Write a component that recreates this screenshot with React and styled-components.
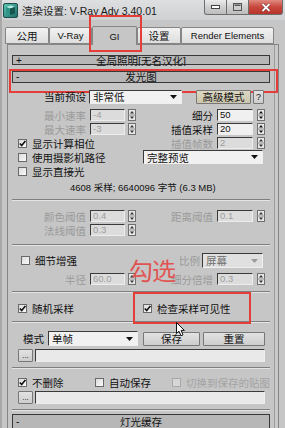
import React from 'react';
import styled, { createGlobalStyle, css } from 'styled-components';

const FONT = `"Liberation Sans", "Noto Sans CJK SC", sans-serif`;
const RED = '#e43e3a';

const Global = createGlobalStyle`
  html, body { margin: 0; padding: 0; background: #c5c5c5; }
  #root { width: 285px; height: 428px; overflow: hidden; }
  * { box-sizing: border-box; }
`;

const Window = styled.div`
  position: relative;
  width: 285px;
  height: 428px;
  overflow: hidden;
  background: #c6c6c6;
  border-left: 2px solid #a9a9a9;
  font-family: ${FONT};
  font-size: 10.5px;
  color: #111;
  display: flex;
  flex-direction: column;
`;

const TitleBar = styled.div`
  height: 20px;
  flex: none;
  display: flex;
  align-items: center;
  padding-left: 1px;
  background: linear-gradient(#dedfe0, #cfd0d1);
`;

const TitleText = styled.span`
  margin-left: 4px;
  font-size: 10.5px;
  color: #1a1a1a;
  white-space: nowrap;
`;

const Controls = styled.div`
  margin-left: auto;
  margin-right: 2px;
  align-self: flex-start;
  display: flex;
  height: 15px;
`;

const CtrlBtn = styled.div`
  width: ${p => p.$w}px;
  height: 15px;
  border: 1px solid #6d6d6d;
  border-left: ${p => (p.$first ? '1px solid #6d6d6d' : 'none')};
  border-top: none;
  display: flex;
  align-items: center;
  justify-content: center;
  background: ${p =>
    p.$close
      ? 'linear-gradient(#e08a80, #c9473c 50%, #b7342b)'
      : 'linear-gradient(#ececec, #cfcfcf 50%, #bdbdbd)'};
  border-radius: ${p => p.$radius || '0'};
  color: #fff;
  font-weight: bold;
  font-size: 10px;
`;

const TabsRow = styled.div`
  margin-top: 6px;
  height: 18px;
  flex: none;
  display: flex;
  align-items: flex-end;
  padding-left: 3px;
`;

const Tab = styled.div`
  position: relative;
  width: ${p => p.$w}px;
  height: ${p => (p.$active ? 19 : 17)}px;
  margin-bottom: ${p => (p.$active ? -1 : 0)}px;
  z-index: ${p => (p.$active ? 2 : 1)};
  display: flex;
  align-items: center;
  justify-content: center;
  border: 1px solid #858585;
  border-bottom: ${p => (p.$active ? 'none' : '1px solid #858585')};
  border-radius: 2px 2px 0 0;
  background: ${p => (p.$active ? '#c6c6c6' : 'linear-gradient(#f2f2f2, #dddddd)')};
  font-size: ${p => (p.$latin ? 9.5 : 10.5)}px;
  white-space: nowrap;
  ${p =>
    p.$highlight &&
    css`
      &::after {
        content: '';
        position: absolute;
        left: -4px;
        top: -12px;
        width: 49px;
        height: 33px;
        border: 2px solid ${RED};
      }
    `}
`;

const Panel = styled.div`
  flex: 1;
  margin: 0 6px 0 5px;
  border: 1px solid #858585;
  border-bottom: none;
  display: flex;
  overflow: hidden;
  background: #c6c6c6;
`;

const Content = styled.div`
  flex: 1;
  padding: 10px 4px 0 4px;
  display: flex;
  flex-direction: column;
`;

const ScrollTrack = styled.div`
  width: 6px;
  flex: none;
  border-left: 1px solid #9c9c9c;
  background: #c9c9c9;
`;

const Header = styled.div`
  position: relative;
  flex: none;
  height: ${p => p.$h}px;
  margin-top: ${p => p.$mt || 0}px;
  border: 1px solid #383838;
  background: #b7b7b7;
  display: grid;
  grid-template-columns: 14px 1fr 14px;
  align-items: center;
  line-height: 1;
  ${p =>
    p.$highlight &&
    css`
      &::after {
        content: '';
        position: absolute;
        left: -4px;
        top: -3px;
        width: 265px;
        height: 20px;
        border: 2px solid ${RED};
      }
    `}
`;

const Sign = styled.span`
  padding-left: 3px;
  font-size: 10px;
`;

const HeaderTitle = styled.span`
  text-align: center;
  overflow: hidden;
  height: 100%;
  display: flex;
  align-items: center;
  justify-content: center;
  font-size: 10.5px;
`;

const Body = styled.div`
  position: relative;
  display: flex;
  flex-direction: column;
`;

const Row = styled.div`
  display: flex;
  align-items: center;
  flex: none;
  height: ${p => p.$h}px;
  margin-top: ${p => p.$mt || 0}px;
  padding-left: ${p => p.$pl || 0}px;
`;

const Group = styled.div`
  display: flex;
  align-items: center;
  flex: none;
  width: ${p => p.$w}px;
  padding-left: ${p => p.$pl || 0}px;
`;

const Label = styled.span`
  flex: none;
  width: ${p => (p.$w ? `${p.$w}px` : 'auto')};
  text-align: right;
  white-space: nowrap;
  color: ${p => (p.$dim ? '#9a9a9a' : '#111')};
`;

const Field = styled.div`
  flex: none;
  width: ${p => p.$w}px;
  height: 12px;
  margin-left: ${p => p.$ml || 0}px;
  background: ${p => (p.$dim ? '#dcdcdc' : '#f0f0f0')};
  border-top: 1px solid #3a3a3a;
  border-left: 1px solid #3a3a3a;
  border-right: 1px solid #ededed;
  border-bottom: 1px solid #ededed;
  color: ${p => (p.$dim ? '#9c9c9c' : '#111')};
  font-family: "Liberation Sans", sans-serif;
  font-size: 9.5px;
  line-height: 10px;
  padding-left: 2px;
  white-space: nowrap;
  overflow: hidden;
`;

const LongField = styled(Field)`
  height: 13px;
  background: #e9e9e9;
`;

const SelectBox = styled.div`
  flex: none;
  width: ${p => p.$w}px;
  height: ${p => p.$h || 14}px;
  margin-left: ${p => p.$ml || 0}px;
  display: flex;
  align-items: center;
  justify-content: space-between;
  padding: 0 4px 0 3px;
  background: ${p => (p.$dim ? '#e0e0e0' : '#f1f1f1')};
  border-top: 1px solid #3a3a3a;
  border-left: 1px solid #3a3a3a;
  border-right: 1px solid #efefef;
  border-bottom: 1px solid #efefef;
  color: ${p => (p.$dim ? '#6f6f6f' : '#111')};
  white-space: nowrap;
`;

const Button = styled.div`
  flex: none;
  width: ${p => p.$w}px;
  height: ${p => p.$h || 14}px;
  margin-left: ${p => p.$ml || 0}px;
  display: flex;
  align-items: center;
  justify-content: center;
  border: 1px solid #777;
  border-radius: 1px;
  background: ${p =>
    p.$tan ? 'linear-gradient(#dcd8c2, #cbc6ad)' : 'linear-gradient(#e2e2e2, #cdcdcd)'};
  white-space: nowrap;
  font-size: ${p => p.$fs || 10.5}px;
`;

const Box = styled.span`
  flex: none;
  width: 9px;
  height: 9px;
  border: 1px solid ${p => (p.$dim ? '#a8a8a8' : '#6a6a6a')};
  background: ${p => (p.$dim ? '#d6d6d6' : 'linear-gradient(135deg, #dcdcdc, #fafafa)')};
  display: flex;
  align-items: center;
  justify-content: center;
`;

const CheckItem = styled.div`
  position: relative;
  display: flex;
  align-items: center;
  gap: 5px;
  flex: none;
  width: ${p => (p.$w ? `${p.$w}px` : 'auto')};
  color: ${p => (p.$dim ? '#a3a3a3' : '#111')};
  white-space: nowrap;
  ${p =>
    p.$highlight &&
    css`
      &::after {
        content: '';
        position: absolute;
        left: -10px;
        top: -9px;
        width: 114px;
        height: 28px;
        border: 2px solid ${RED};
      }
    `}
`;

const Info = styled.div`
  flex: none;
  margin-top: ${p => p.$mt}px;
  height: 12px;
  padding-left: 58px;
  font-size: 9.5px;
  line-height: 12px;
  white-space: nowrap;
`;

const Divider = styled.div`
  flex: none;
  margin-top: ${p => p.$mt}px;
  height: 2px;
  border-top: 1px solid #7f7f7f;
  border-bottom: 1px solid #e4e4e4;
`;

const Annotation = styled.div`
  position: absolute;
  left: 117px;
  top: 172px;
  font-family: "Noto Sans CJK SC", sans-serif;
  font-size: 24px;
  line-height: 30px;
  color: #e05452;
  letter-spacing: -1px;
`;

const CursorMark = styled.svg`
  position: absolute;
  left: 164px;
  top: 239px;
`;

const AppIcon = () => (
  <svg width="15" height="15" viewBox="0 0 15 15">
    <defs>
      <linearGradient id="ig" x1="0" y1="0" x2="1" y2="1">
        <stop offset="0" stopColor="#5cc6b4" />
        <stop offset="1" stopColor="#1b6b66" />
      </linearGradient>
    </defs>
    <rect x="0.5" y="0.5" width="14" height="14" rx="1.5" fill="url(#ig)" stroke="#1f4d4a" />
    <path d="M3 4 L8 2.5 L12 4 L7 5.5 Z" fill="#b8efe4" />
    <path d="M3 4 L7 5.5 L7 12 L3 10.5 Z" fill="#2f9486" />
    <path d="M7 5.5 L12 4 L12 10.5 L7 12 Z" fill="#16554f" />
  </svg>
);

const Arrows = ({ ml = 3, dim }) => (
  <svg width="8" height="12" viewBox="0 0 8 12" style={{ marginLeft: ml, flex: 'none' }}>
    <rect x="0.5" y="0.5" width="7" height="11" fill="#e6e6e6" stroke="#707070" />
    <line x1="0.5" y1="6" x2="7.5" y2="6" stroke="#909090" />
    <path d="M4 2 L6 4.5 L2 4.5 Z" fill={dim ? '#333' : '#111'} />
    <path d="M4 10 L6 7.5 L2 7.5 Z" fill={dim ? '#333' : '#111'} />
  </svg>
);

const DropArrow = ({ dim }) => (
  <svg width="7" height="4" viewBox="0 0 7 4">
    <path d="M0 0 L7 0 L3.5 4 Z" fill={dim ? '#9a9a9a' : '#111'} />
  </svg>
);

const Check = ({ on, dim }) => (
  <Box $dim={dim}>
    {on && (
      <svg width="7" height="7" viewBox="0 0 7 7">
        <path d="M0.8 3.4 L2.7 5.6 L6.4 0.9" fill="none" stroke="#111" strokeWidth="1.6" />
      </svg>
    )}
  </Box>
);

const Spin = ({ value, dim, w = 35, ml = 4, aml = 3 }) => (
  <>
    <Field $w={w} $ml={ml} $dim={dim}>{value}</Field>
    <Arrows ml={aml} dim={dim} />
  </>
);

const Select = ({ text, w, ml, dim, h }) => (
  <SelectBox $w={w} $ml={ml} $dim={dim} $h={h}>
    <span>{text}</span>
    <DropArrow dim={dim} />
  </SelectBox>
);

export default function App() {
  return (
    <Window>
      <Global />
      <TitleBar>
        <AppIcon />
        <TitleText>渲染设置: V-Ray Adv 3.40.01</TitleText>
        <Controls>
          <CtrlBtn $w={23} $first $radius="0 0 0 3px">
            <svg width="9" height="4" viewBox="0 0 9 4">
              <rect x="0.5" y="0.5" width="8" height="3" fill="#fff" stroke="#444" />
            </svg>
          </CtrlBtn>
          <CtrlBtn $w={22}>
            <svg width="9" height="8" viewBox="0 0 9 8">
              <rect x="0.5" y="0.5" width="8" height="7" fill="none" stroke="#555" />
              <rect x="1.5" y="1.5" width="6" height="1.5" fill="#555" />
            </svg>
          </CtrlBtn>
          <CtrlBtn $w={34} $close $radius="0 0 3px 0">
            <svg width="10" height="9" viewBox="0 0 10 9">
              <path d="M1.5 1 L8.5 8 M8.5 1 L1.5 8" stroke="#6a2a24" strokeWidth="3" />
              <path d="M1.5 1 L8.5 8 M8.5 1 L1.5 8" stroke="#fff" strokeWidth="1.8" />
            </svg>
          </CtrlBtn>
        </Controls>
      </TitleBar>

      <TabsRow>
        <Tab $w={44}>公用</Tab>
        <Tab $w={43} $latin>V-Ray</Tab>
        <Tab $w={45} $active $highlight $latin>GI</Tab>
        <Tab $w={44}>设置</Tab>
        <Tab $w={93} $latin>Render Elements</Tab>
      </TabsRow>

      <Panel>
        <Content>
          <Header $h={10}>
            <Sign>+</Sign>
            <HeaderTitle>全局照明[无名汉化]</HeaderTitle>
          </Header>
          <Header $h={12} $mt={6} $highlight>
            <Sign>-</Sign>
            <HeaderTitle>发光图</HeaderTitle>
          </Header>

          <Body>
            <Row $h={15} $mt={6}>
              <Label $w={74}>当前预设</Label>
              <Select text="非常低" w={93} ml={3} />
              <Button $w={55} $ml={14} $tan>高级模式</Button>
              <Button $w={11} $ml={2} $fs={9}>?</Button>
            </Row>

            <Row $h={14} $mt={4}>
              <Label $w={74} $dim>最小速率</Label>
              <Spin value="-4" dim />
              <Label $w={77}>细分</Label>
              <Spin value="50" w={36} ml={4} aml={4} />
            </Row>
            <Row $h={14}>
              <Label $w={74} $dim>最大速率</Label>
              <Spin value="-3" dim />
              <Label $w={77}>插值采样</Label>
              <Spin value="20" w={36} ml={4} aml={4} />
            </Row>
            <Row $h={14}>
              <Group $w={124} $pl={6}>
                <CheckItem>
                  <Check on />
                  显示计算相位
                </CheckItem>
              </Group>
              <Label $w={77} $dim>插值帧数</Label>
              <Spin value="2" w={36} ml={4} aml={4} dim />
            </Row>
            <Row $h={14}>
              <Group $w={131} $pl={6}>
                <CheckItem>
                  <Check />
                  使用摄影机路径
                </CheckItem>
              </Group>
              <Select text="完整预览" w={120} />
            </Row>
            <Row $h={14}>
              <Group $w={131} $pl={6}>
                <CheckItem>
                  <Check />
                  显示直接光
                </CheckItem>
              </Group>
            </Row>

            <Info $mt={4}>4608 采样; 6640096 字节 (6.3 MB)</Info>

            <Divider $mt={5} />

            <Row $h={14} $mt={8}>
              <Label $w={74} $dim>颜色阈值</Label>
              <Spin value="0.4" dim />
              <Label $w={77} $dim>距离阈值</Label>
              <Spin value="0.1" w={36} ml={4} aml={4} dim />
            </Row>
            <Row $h={14}>
              <Label $w={74} $dim>法线阈值</Label>
              <Spin value="0.3" dim />
            </Row>

            <Divider $mt={7} />

            <Row $h={15} $mt={7}>
              <Group $w={124} $pl={9}>
                <CheckItem>
                  <Check />
                  细节增强
                </CheckItem>
              </Group>
              <Label $w={64} $dim>比例</Label>
              <Select text="屏幕" w={61} ml={2} dim h={15} />
            </Row>
            <Row $h={14} $mt={4}>
              <Label $w={74} $dim>半径</Label>
              <Spin value="60.0" dim />
              <Label $w={77} $dim>细分倍增</Label>
              <Spin value="0.3" w={36} ml={4} aml={4} dim />
            </Row>

            <Divider $mt={5} />

            <Row $h={14} $mt={8}>
              <Group $w={131} $pl={6}>
                <CheckItem>
                  <Check on />
                  随机采样
                </CheckItem>
              </Group>
              <CheckItem $highlight>
                <Check on />
                检查采样可见性
              </CheckItem>
            </Row>

            <Divider $mt={6} />

            <Row $h={15} $mt={8}>
              <Label $w={32}>模式</Label>
              <Select text="单帧" w={90} ml={4} h={15} />
              <Button $w={57} $ml={5}>保存</Button>
              <Button $w={62} $ml={3}>重置</Button>
            </Row>
            <Row $h={13} $mt={3} $pl={6}>
              <Button $w={15} $h={13} $fs={8}>...</Button>
              <LongField $w={230} $ml={2} />
            </Row>

            <Divider $mt={5} />

            <Row $h={14} $mt={6} $pl={6}>
              <Group $w={77}>
                <CheckItem>
                  <Check on />
                  不删除
                </CheckItem>
              </Group>
              <Group $w={77}>
                <CheckItem>
                  <Check />
                  自动保存
                </CheckItem>
              </Group>
              <CheckItem $dim>
                <Check dim />
                切换到保存的贴图
              </CheckItem>
            </Row>
            <Row $h={13} $mt={2} $pl={6}>
              <Button $w={15} $h={13} $fs={8}>...</Button>
              <LongField $w={230} $ml={2} />
            </Row>

            <Divider $mt={5} />

            <Annotation>勾选</Annotation>
            <CursorMark width="10" height="15" viewBox="0 0 10 15">
              <path
                d="M0.5 0.5 L0.5 11.5 L3 9.2 L5 13.8 L7 12.9 L5.1 8.4 L8.4 8.4 Z"
                fill="#fff"
                stroke="#111"
                strokeWidth="1"
                strokeLinejoin="round"
              />
            </CursorMark>
          </Body>

          <Header $h={16} $mt={3}>
            <Sign>-</Sign>
            <HeaderTitle>灯光缓存</HeaderTitle>
          </Header>
        </Content>
        <ScrollTrack />
      </Panel>
    </Window>
  );
}
